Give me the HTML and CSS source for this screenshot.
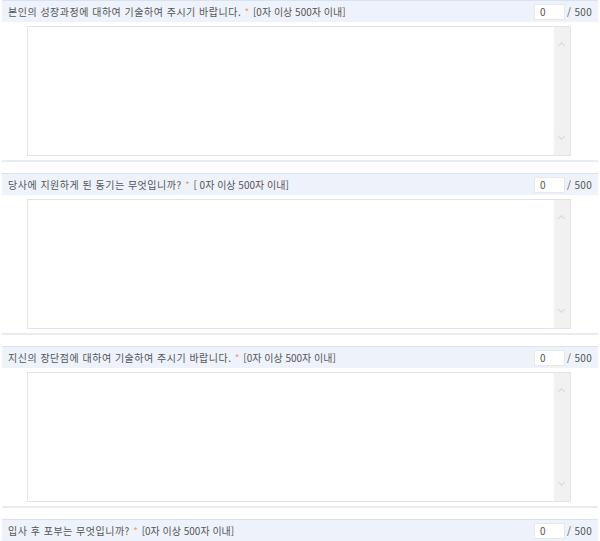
FILE: index.html
```html
<!DOCTYPE html>
<html lang="ko">
<head>
<meta charset="utf-8">
<link rel="stylesheet" href="styles.css">
</head>
<body>
<div class="list">
  <section class="item">
    <div class="head">
      <span class="q">본인의 성장과정에 대하여 기술하여 주시기 바랍니다. <span class="star">*</span> <span class="rule">[0자 이상 500자 이내]</span></span>
      <span class="count"><span class="num">0</span><span class="max">/ 500</span></span>
    </div>
    <div class="box"><div class="area"></div><div class="sb"><span class="up"></span><span class="down"></span></div></div>
  </section>
  <section class="item">
    <div class="head">
      <span class="q">당사에 지원하게 된 동기는 무엇입니까? <span class="star">*</span> <span class="rule">[ 0자 이상 500자 이내]</span></span>
      <span class="count"><span class="num">0</span><span class="max">/ 500</span></span>
    </div>
    <div class="box"><div class="area"></div><div class="sb"><span class="up"></span><span class="down"></span></div></div>
  </section>
  <section class="item">
    <div class="head">
      <span class="q">지신의 장단점에 대하여 기술하여 주시기 바랍니다. <span class="star">*</span> <span class="rule">[0자 이상 500자 이내]</span></span>
      <span class="count"><span class="num">0</span><span class="max">/ 500</span></span>
    </div>
    <div class="box"><div class="area"></div><div class="sb"><span class="up"></span><span class="down"></span></div></div>
  </section>
  <section class="item">
    <div class="head">
      <span class="q">입사 후 포부는 무엇입니까? <span class="star">*</span> <span class="rule">[0자 이상 500자 이내]</span></span>
      <span class="count"><span class="num">0</span><span class="max">/ 500</span></span>
    </div>
  </section>
</div>
</body>
</html>
```
FILE: styles.css
```css
html, body { margin: 0; padding: 0; background: #fff; }
body {
  font-family: "Noto Sans CJK KR", "Noto Sans", sans-serif;
  font-size: 10px;
  color: #555;
  width: 600px;
  overflow: hidden;
}
.list { display: flex; flex-direction: column; }
.item {
  display: flex;
  flex-direction: column;
  margin: 0 2px 11px;
}
.head {
  height: 21px;
  background: #eef2fb;
  border-top: 1px solid #d9e2f1;
  display: flex;
  align-items: center;
  justify-content: space-between;
  padding: 0 6px;
}
.q { letter-spacing: 0.5px; white-space: nowrap; }
.rule { letter-spacing: 0; }
.star { color: #f29a6a; }
.count { display: flex; align-items: center; }
.num {
  width: 24px;
  height: 14px;
  line-height: 14px;
  background: #fff;
  border: 1px solid #e8e8e8;
  padding-left: 5px;
  margin-right: 2px;
}
.max { letter-spacing: 0.3px; }
.box {
  margin: 4px 0 0 25px;
  width: 544px;
  height: 130px;
  border: 1px solid #e3e3e3;
  box-sizing: border-box;
  display: flex;
  background: #fff;
}
.area { flex: 1; }
.sb {
  width: 16px;
  background: #f1f1f1;
  position: relative;
}
.up, .down {
  position: absolute;
  left: 5px;
  width: 4px;
  height: 4px;
  border-left: 1px solid #d8d8d8;
  border-top: 1px solid #d8d8d8;
}
.up { top: 16px; transform: rotate(45deg); }
.down { bottom: 16px; transform: rotate(-135deg); }
.item::after {
  content: "";
  display: block;
  height: 2px;
  background: #e8ecf2;
  margin-top: 4px;
}
.item:last-child::after { display: none; }
```
